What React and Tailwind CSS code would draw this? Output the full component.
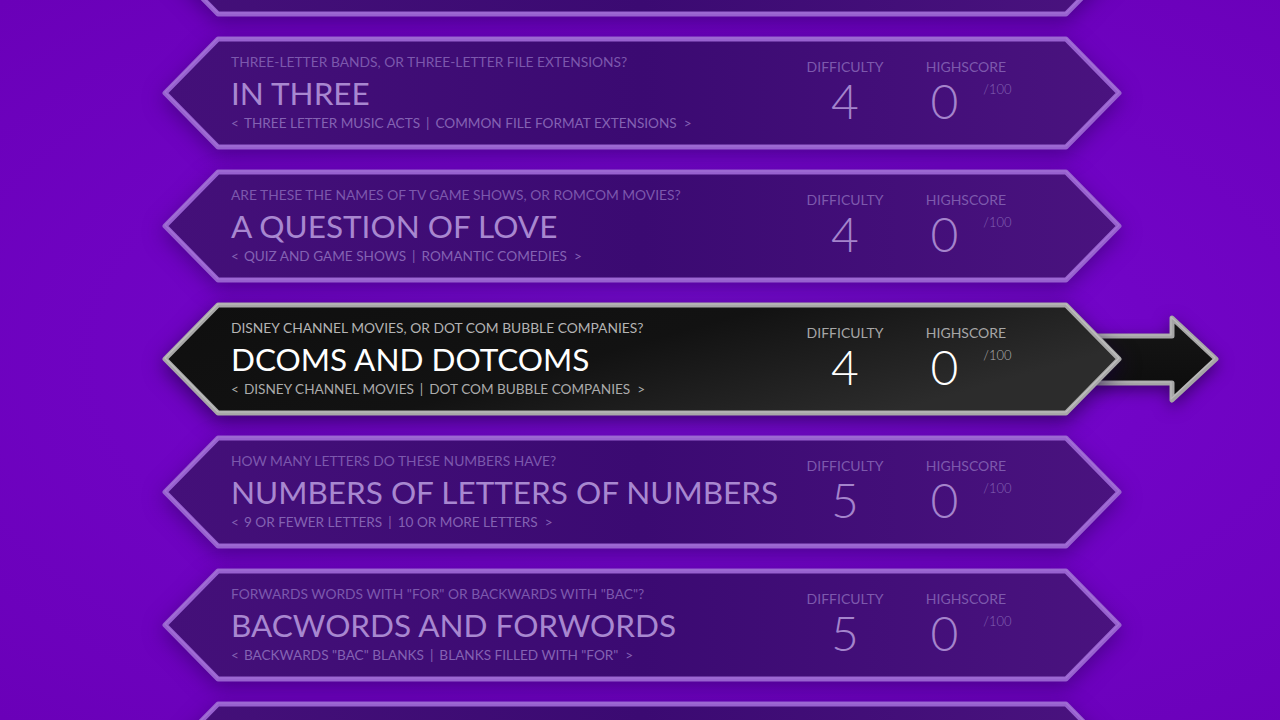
import React from 'react'

const levels = [
  { partial: true },
  {
    question: 'THREE-LETTER BANDS, OR THREE-LETTER FILE EXTENSIONS?',
    title: 'IN THREE',
    left: 'THREE LETTER MUSIC ACTS',
    right: 'COMMON FILE FORMAT EXTENSIONS',
    difficulty: 4,
    score: 0,
  },
  {
    question: 'ARE THESE THE NAMES OF TV GAME SHOWS, OR ROMCOM MOVIES?',
    title: 'A QUESTION OF LOVE',
    left: 'QUIZ AND GAME SHOWS',
    right: 'ROMANTIC COMEDIES',
    difficulty: 4,
    score: 0,
  },
  {
    question: 'DISNEY CHANNEL MOVIES, OR DOT COM BUBBLE COMPANIES?',
    title: 'DCOMS AND DOTCOMS',
    left: 'DISNEY CHANNEL MOVIES',
    right: 'DOT COM BUBBLE COMPANIES',
    difficulty: 4,
    score: 0,
    selected: true,
  },
  {
    question: 'HOW MANY LETTERS DO THESE NUMBERS HAVE?',
    title: 'NUMBERS OF LETTERS OF NUMBERS',
    left: '9 OR FEWER LETTERS',
    right: '10 OR MORE LETTERS',
    difficulty: 5,
    score: 0,
  },
  {
    question: 'FORWARDS WORDS WITH "FOR" OR BACKWARDS WITH "BAC"?',
    title: 'BACWORDS AND FORWORDS',
    left: 'BACKWARDS "BAC" BLANKS',
    right: 'BLANKS FILLED WITH "FOR"',
    difficulty: 5,
    score: 0,
  },
  { partial: true },
]

const SHAPE = '3,57 56,3 904,3 957,57 904,111 56,111'

function Arrow() {
  // arrow poking out of the selected card
  return (
    <svg
      className="absolute left-[933px] top-[12px] h-[90px] w-[125px] overflow-visible [filter:drop-shadow(0_5px_8px_rgba(30,0,60,0.6))]"
      viewBox="0 0 125 90"
    >
      <defs>
        <linearGradient id="arrowFill" x1="0" y1="0" x2="0" y2="1">
          <stop offset="0" stopColor="#161616" />
          <stop offset="1" stopColor="#0c0c0c" />
        </linearGradient>
      </defs>
      <polygon
        points="0,22 77,22 77,4 121,45 77,86 77,69 0,69"
        fill="url(#arrowFill)"
        stroke="#a6a6a6"
        strokeWidth="5"
        strokeLinejoin="round"
      />
      <polygon
        points="0,22 77,22 77,4 121,45 77,86 77,69 0,69"
        fill="none"
        stroke="#cfcfcf"
        strokeOpacity="0.5"
        strokeWidth="1.2"
        strokeLinejoin="round"
        transform="translate(-1 -1)"
      />
    </svg>
  )
}

function CardShape({ id, selected }) {
  return (
    <svg
      className={`absolute inset-0 h-full w-full overflow-visible ${
        selected
          ? '[filter:drop-shadow(0_6px_10px_rgba(25,0,60,0.65))]'
          : '[filter:drop-shadow(0_6px_10px_rgba(40,0,90,0.5))]'
      }`}
      viewBox="0 0 960 114"
    >
      <defs>
        {selected ? (
          <linearGradient id={id} x1="0" y1="0" x2="1" y2="0.4">
            <stop offset="0" stopColor="#0f0f0f" />
            <stop offset="0.55" stopColor="#121212" />
            <stop offset="1" stopColor="#2c2c2c" />
          </linearGradient>
        ) : (
          <linearGradient id={id} x1="0" y1="0" x2="1" y2="0">
            <stop offset="0" stopColor="#441079" />
            <stop offset="0.5" stopColor="#3b0a72" />
            <stop offset="1" stopColor="#4a137f" />
          </linearGradient>
        )}
      </defs>
      <polygon
        points={SHAPE}
        fill={`url(#${id})`}
        stroke={selected ? '#a8a8a8' : '#9761cf'}
        strokeWidth="5"
        strokeLinejoin="round"
      />
      <polygon
        points={SHAPE}
        fill="none"
        stroke={selected ? '#d2d2d2' : '#ad7ddd'}
        strokeOpacity="0.55"
        strokeWidth="1.2"
        strokeLinejoin="round"
        transform="translate(0 -1)"
      />
    </svg>
  )
}

function LevelCard({ level, index }) {
  const sel = level.selected
  if (level.partial) {
    return (
      <div className="relative ml-[162px] h-[114px] w-[960px] shrink-0">
        <CardShape id={`cardFill${index}`} />
      </div>
    )
  }
  return (
    <div className="relative ml-[162px] h-[114px] w-[960px] shrink-0">
      {sel && <Arrow />}
      <CardShape id={`cardFill${index}`} selected={sel} />
      <div className="relative flex h-full pl-[69px]">
        <div className="flex flex-1 flex-col pt-[18px]">
          <div className={`text-[13.8px] leading-[16px] ${sel ? 'text-[#b4b4b4]' : 'text-[#7c58ad]'}`}>
            {level.question}
          </div>
          <div className={`mt-[6px] text-[31.5px] leading-[35px] ${sel ? 'text-white' : 'text-[#a887d0]'}`}>
            {level.title}
          </div>
          <div className={`mt-[4px] text-[13.6px] leading-[16px] ${sel ? 'text-[#ababab]' : 'text-[#8462b3]'}`}>
            <span className="mr-[5px]">&lt;</span>
            {level.left}
            <span className="mx-[6px]">|</span>
            {level.right}
            <span className="ml-[7px]">&gt;</span>
          </div>
        </div>
        <div className="flex w-[122px] flex-col items-center pt-[23px]">
          <div className={`text-[14px] leading-[16px] ${sel ? 'text-[#a6a6a6]' : 'text-[#7d59ad]'}`}>DIFFICULTY</div>
          <div className={`mt-[2px] text-[48px] font-light leading-[48px] ${sel ? 'text-white' : 'text-[#a484cc]'}`}>
            {level.difficulty}
          </div>
        </div>
        <div className="mr-[96px] flex w-[120px] flex-col items-center pt-[23px]">
          <div className={`text-[14px] leading-[16px] ${sel ? 'text-[#a6a6a6]' : 'text-[#7d59ad]'}`}>HIGHSCORE</div>
          <div className="mt-[2px] flex items-start pl-[10px]">
            <span className={`text-[48px] font-light leading-[48px] ${sel ? 'text-white' : 'text-[#a484cc]'}`}>
              {level.score}
            </span>
            <span className={`ml-[25px] mt-[3px] text-[13px] font-light ${sel ? 'text-[#b0b0b0]' : 'text-[#8462b3]'}`}>
              /100
            </span>
          </div>
        </div>
      </div>
    </div>
  )
}

export default function App() {
  return (
    <div className="h-[720px] w-[1280px] overflow-hidden bg-[#6c00bb] bg-[radial-gradient(ellipse_at_55%_50%,#7a0cd6_0%,#7104c6_45%,#6a00b8_100%)] font-[Lato,sans-serif]">
      <div className="-mt-[97px] flex flex-col gap-[19px]">
        {levels.map((level, i) => (
          <LevelCard key={i} level={level} index={i} />
        ))}
      </div>
    </div>
  )
}
